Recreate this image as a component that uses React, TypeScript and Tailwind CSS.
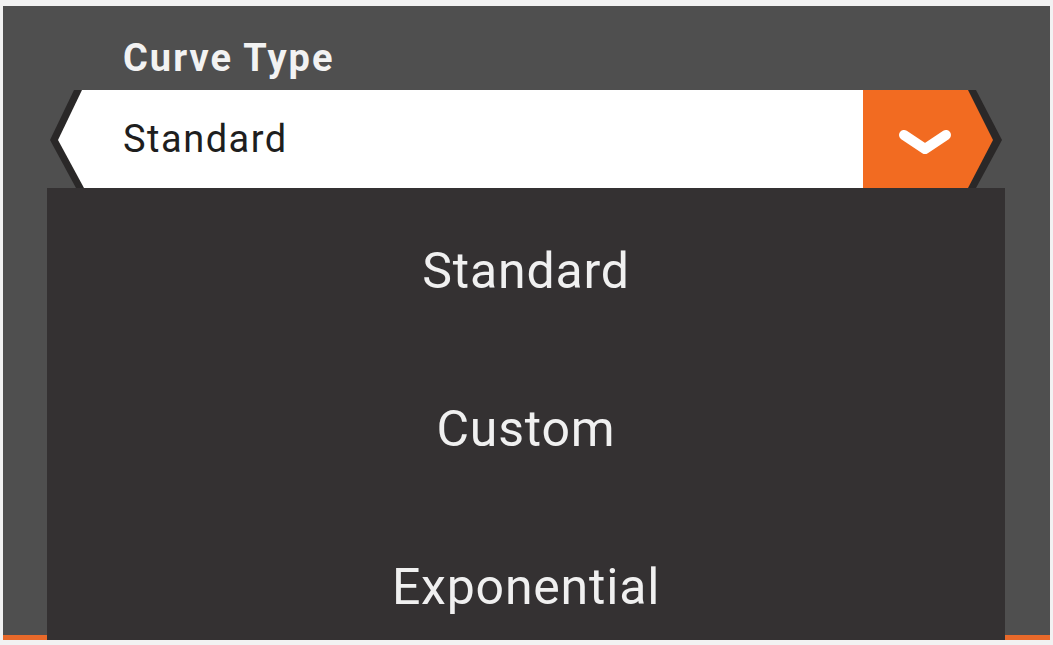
import React from "react";

const font = { fontFamily: "Roboto, 'Noto Sans', sans-serif" };

export default function App() {
  return (
    <div
      className="w-[1053px] h-[645px] bg-[#f2f2f2] pt-[6px] px-[3px] pb-[5px]"
      style={font}
    >
      <div className="relative h-full bg-[#4f4f4f] border-b-[5px] border-[#e8692a] pt-[28px]">
        <div className="pl-[120px] h-[48px] leading-[48px] text-[38px] font-bold text-[#f2f2f2] tracking-[2px]">
          Curve Type
        </div>
        <div className="relative mt-[8px] ml-[44px] w-[958px] h-[98px]">
          <div className="absolute inset-0 bg-[#2a2828] [clip-path:polygon(27px_0,929px_0,955px_50px,929px_98px,29px_98px,3px_50px)]" />
          <div className="absolute inset-0 flex">
            <div className="w-[816px] h-full bg-white flex items-center pl-[76px] text-[38px] text-[#1e1e1e] tracking-[1.5px] [clip-path:polygon(35px_0,816px_0,816px_98px,37px_98px,11px_50px)]">
              Standard
            </div>
            <div className="w-[130px] h-full bg-[#f26b21] flex items-center pl-[34px] pt-[8px] [clip-path:polygon(0_0,105px_0,130px_50px,105px_98px,0_98px)]">
              <svg width="56" height="32" viewBox="0 0 56 32">
                <polyline
                  points="7,8 28,22 49,8"
                  fill="none"
                  stroke="#ffffff"
                  strokeWidth="10"
                  strokeLinecap="round"
                  strokeLinejoin="round"
                />
              </svg>
            </div>
          </div>
        </div>
        <div className="absolute left-[44px] top-[182px] w-[958px] h-[452px] overflow-hidden bg-[#343132] flex flex-col pt-[4px] text-[50px] text-[#f0f0f0] tracking-[0.8px]">
          <div className="h-[158px] shrink-0 flex items-center justify-center">Standard</div>
          <div className="h-[158px] shrink-0 flex items-center justify-center">Custom</div>
          <div className="h-[158px] shrink-0 flex items-center justify-center">Exponential</div>
        </div>
      </div>
    </div>
  );
}
